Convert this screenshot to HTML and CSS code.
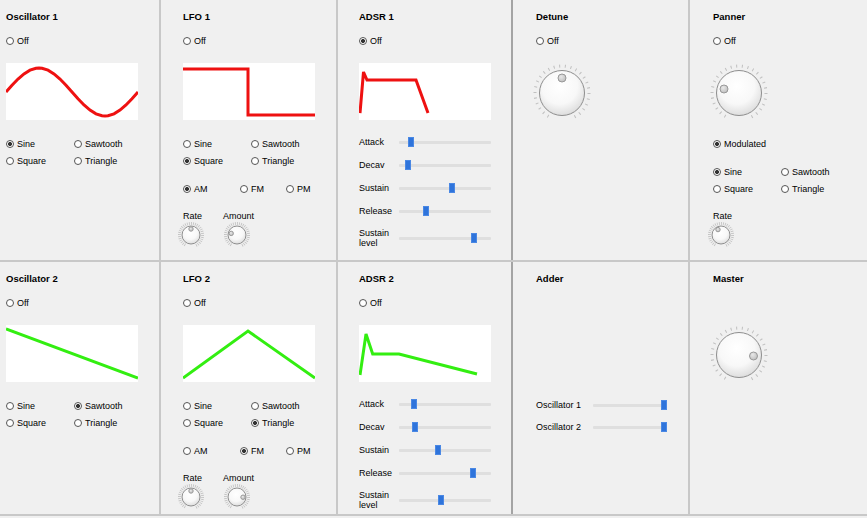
FILE: index.html
```html
<!DOCTYPE html>
<html>
<head>
<meta charset="utf-8">
<link rel="stylesheet" href="styles.css">
</head>
<body>
<svg class="defs" width="0" height="0">
  <defs>
    <radialGradient id="kg" cx="0.45" cy="0.35" r="0.72">
      <stop offset="0" stop-color="#ffffff"/>
      <stop offset="0.55" stop-color="#f8f8f8"/>
      <stop offset="1" stop-color="#d6d6d6"/>
    </radialGradient>
    <radialGradient id="dg" cx="0.4" cy="0.35" r="0.7">
      <stop offset="0" stop-color="#e8e8e8"/>
      <stop offset="1" stop-color="#bcbcbc"/>
    </radialGradient>
  </defs>
</svg>
<div class="grid">
  <!-- Row 1 -->
  <div class="cell c1">
    <div class="title">Oscillator 1</div>
    <div class="radio off"><span class="rb"></span>Off</div>
    <svg class="wave" viewBox="0 0 132 57"><polyline class="red" points="0,29 6,22.24 12,16.03 18,10.86 24,7.17 30,5.24 33,5 36,5.24 42,7.17 48,10.86 54,16.03 60,22.24 66,29 72,35.76 78,41.97 84,47.14 90,50.83 96,52.76 99,53 102,52.76 108,50.83 114,47.14 120,41.97 126,35.76 132,29"/></svg>
    <div class="opts">
      <div class="radio"><span class="rb on"></span>Sine</div>
      <div class="radio"><span class="rb"></span>Sawtooth</div>
      <div class="radio"><span class="rb"></span>Square</div>
      <div class="radio"><span class="rb"></span>Triangle</div>
    </div>
  </div>
  <div class="cell c2">
    <div class="title">LFO 1</div>
    <div class="radio off"><span class="rb"></span>Off</div>
    <svg class="wave" viewBox="0 0 132 57"><polyline class="red" points="0,6 65,6 65,52 132,52"/></svg>
    <div class="opts">
      <div class="radio"><span class="rb"></span>Sine</div>
      <div class="radio"><span class="rb"></span>Sawtooth</div>
      <div class="radio"><span class="rb on"></span>Square</div>
      <div class="radio"><span class="rb"></span>Triangle</div>
    </div>
    <div class="modes">
      <div class="radio"><span class="rb on"></span>AM</div>
      <div class="radio"><span class="rb"></span>FM</div>
      <div class="radio"><span class="rb"></span>PM</div>
    </div>
    <div class="knobs">
      <div class="kgroup kg1">
        <div class="klabel">Rate</div>
        <svg class="sknob" viewBox="0 0 28 28"><circle class="sticks" cx="14" cy="14" r="11.5" pathLength="360" transform="rotate(120 14 14)"/><circle class="body" cx="14" cy="14" r="9"/><circle class="dot" cx="14" cy="8" r="2.2"/></svg>
      </div>
      <div class="kgroup kg2">
        <div class="klabel">Amount</div>
        <svg class="sknob" viewBox="0 0 28 28"><circle class="sticks" cx="14" cy="14" r="11.5" pathLength="360" transform="rotate(120 14 14)"/><circle class="body" cx="14" cy="14" r="9"/><circle class="dot" cx="8.2" cy="12.4" r="2.2"/></svg>
      </div>
    </div>
  </div>
  <div class="cell c3">
    <div class="title">ADSR 1</div>
    <div class="radio off"><span class="rb on"></span>Off</div>
    <svg class="wave" viewBox="0 0 132 57"><polyline class="red" points="1,50 4.5,9 8,17 57,17 69,50"/></svg>
    <div class="sliders">
      <div class="srow"><div class="slabel">Attack</div><div class="track"><span class="thumb" style="left:9px"></span></div></div>
      <div class="srow"><div class="slabel">Decav</div><div class="track"><span class="thumb" style="left:6px"></span></div></div>
      <div class="srow"><div class="slabel">Sustain</div><div class="track"><span class="thumb" style="left:50px"></span></div></div>
      <div class="srow"><div class="slabel">Release</div><div class="track"><span class="thumb" style="left:24px"></span></div></div>
      <div class="srow two"><div class="slabel">Sustain<br>level</div><div class="track"><span class="thumb" style="left:72px"></span></div></div>
    </div>
  </div>
  <div class="cell c4">
    <div class="title">Detune</div>
    <div class="radio off"><span class="rb"></span>Off</div>
    <svg class="bigknob" viewBox="0 0 64 64"><circle class="bticks" cx="32" cy="32" r="27" pathLength="360" transform="rotate(120 32 32)"/><circle class="body" cx="32" cy="32" r="22.5"/><circle class="dot" cx="32" cy="17" r="4"/></svg>
  </div>
  <div class="cell c5">
    <div class="title">Panner</div>
    <div class="radio off"><span class="rb"></span>Off</div>
    <svg class="bigknob" viewBox="0 0 64 64"><circle class="bticks" cx="32" cy="32" r="27" pathLength="360" transform="rotate(120 32 32)"/><circle class="body" cx="32" cy="32" r="22.5"/><circle class="dot" cx="17" cy="28" r="4"/></svg>
    <div class="radio mod"><span class="rb on"></span>Modulated</div>
    <div class="opts popts">
      <div class="radio"><span class="rb on"></span>Sine</div>
      <div class="radio"><span class="rb"></span>Sawtooth</div>
      <div class="radio"><span class="rb"></span>Square</div>
      <div class="radio"><span class="rb"></span>Triangle</div>
    </div>
    <div class="knobs">
      <div class="kgroup kg1">
        <div class="klabel">Rate</div>
        <svg class="sknob" viewBox="0 0 28 28"><circle class="sticks" cx="14" cy="14" r="11.5" pathLength="360" transform="rotate(120 14 14)"/><circle class="body" cx="14" cy="14" r="9"/><circle class="dot" cx="11" cy="8.6" r="2.2"/></svg>
      </div>
    </div>
  </div>

  <!-- Row 2 -->
  <div class="cell c1">
    <div class="title">Oscillator 2</div>
    <div class="radio off"><span class="rb"></span>Off</div>
    <svg class="wave" viewBox="0 0 132 57"><polyline class="green" points="0,4 132,53"/></svg>
    <div class="opts">
      <div class="radio"><span class="rb"></span>Sine</div>
      <div class="radio"><span class="rb on"></span>Sawtooth</div>
      <div class="radio"><span class="rb"></span>Square</div>
      <div class="radio"><span class="rb"></span>Triangle</div>
    </div>
  </div>
  <div class="cell c2">
    <div class="title">LFO 2</div>
    <div class="radio off"><span class="rb"></span>Off</div>
    <svg class="wave" viewBox="0 0 132 57"><polyline class="green" points="0,53 65,6 132,53"/></svg>
    <div class="opts">
      <div class="radio"><span class="rb"></span>Sine</div>
      <div class="radio"><span class="rb"></span>Sawtooth</div>
      <div class="radio"><span class="rb"></span>Square</div>
      <div class="radio"><span class="rb on"></span>Triangle</div>
    </div>
    <div class="modes">
      <div class="radio"><span class="rb"></span>AM</div>
      <div class="radio"><span class="rb on"></span>FM</div>
      <div class="radio"><span class="rb"></span>PM</div>
    </div>
    <div class="knobs">
      <div class="kgroup kg1">
        <div class="klabel">Rate</div>
        <svg class="sknob" viewBox="0 0 28 28"><circle class="sticks" cx="14" cy="14" r="11.5" pathLength="360" transform="rotate(120 14 14)"/><circle class="body" cx="14" cy="14" r="9"/><circle class="dot" cx="14" cy="8" r="2.2"/></svg>
      </div>
      <div class="kgroup kg2">
        <div class="klabel">Amount</div>
        <svg class="sknob" viewBox="0 0 28 28"><circle class="sticks" cx="14" cy="14" r="11.5" pathLength="360" transform="rotate(120 14 14)"/><circle class="body" cx="14" cy="14" r="9"/><circle class="dot" cx="20" cy="14.2" r="2.2"/></svg>
      </div>
    </div>
  </div>
  <div class="cell c3">
    <div class="title">ADSR 2</div>
    <div class="radio off"><span class="rb"></span>Off</div>
    <svg class="wave" viewBox="0 0 132 57"><polyline class="green" points="1,50 7,9 13.7,29 40,29 118,49"/></svg>
    <div class="sliders">
      <div class="srow"><div class="slabel">Attack</div><div class="track"><span class="thumb" style="left:12px"></span></div></div>
      <div class="srow"><div class="slabel">Decav</div><div class="track"><span class="thumb" style="left:13px"></span></div></div>
      <div class="srow"><div class="slabel">Sustain</div><div class="track"><span class="thumb" style="left:36px"></span></div></div>
      <div class="srow"><div class="slabel">Release</div><div class="track"><span class="thumb" style="left:71px"></span></div></div>
      <div class="srow two"><div class="slabel">Sustain<br>level</div><div class="track"><span class="thumb" style="left:39px"></span></div></div>
    </div>
  </div>
  <div class="cell c4">
    <div class="title">Adder</div>
    <div class="mix">
      <div class="srow"><div class="mlabel">Oscillator 1</div><div class="track mtrack"><span class="thumb" style="left:68px"></span></div></div>
      <div class="srow"><div class="mlabel">Oscillator 2</div><div class="track mtrack"><span class="thumb" style="left:68px"></span></div></div>
    </div>
  </div>
  <div class="cell c5">
    <div class="title">Master</div>
    <svg class="bigknob master" viewBox="0 0 64 64"><circle class="bticks" cx="32" cy="32" r="27" pathLength="360" transform="rotate(120 32 32)"/><circle class="body" cx="32" cy="32" r="22.5"/><circle class="dot" cx="46.5" cy="33" r="4"/></svg>
  </div>
</div>
</body>
</html>
```

FILE: styles.css
```css
* { box-sizing: border-box; }

body {
  margin: 0;
  width: 867px;
  height: 518px;
  overflow: hidden;
  background: #f0f0f0;
  font-family: "Liberation Sans", Arial, sans-serif;
  font-size: 9px;
  color: #000;
}

.defs { display: block; width: 0; height: 0; }

.grid {
  display: grid;
  grid-template-columns: 159px 175px 173px 175px 177px;
  grid-template-rows: 260px 252px;
  gap: 2px;
  background: #c8c8c8;
  border-bottom: 2px solid #c8c8c8;
}

.cell {
  background: #f0f0f0;
  padding-top: 10px;
  display: flex;
  flex-direction: column;
  align-items: flex-start;
  overflow: hidden;
}

.c1 { padding-left: 6px; }
.c2 { padding-left: 22px; }
.c3 { padding-left: 21px; }
.c4 { padding-left: 23px; box-shadow: -2px 0 0 #a4a4a4; }
.c5 { padding-left: 23px; }

.title {
  font-weight: bold;
  font-size: 9.5px;
  line-height: 14px;
  height: 14px;
  white-space: nowrap;
}

.radio {
  display: flex;
  align-items: center;
  height: 14px;
  line-height: 14px;
  white-space: nowrap;
}

.rb {
  flex: none;
  width: 8px;
  height: 8px;
  margin-right: 3px;
  border: 1px solid #555;
  border-radius: 50%;
  background: #fff;
}

.rb.on {
  background: radial-gradient(circle, #333 0 1.7px, #fff 2.3px);
}

.off { margin-top: 10px; }

.wave {
  display: block;
  width: 132px;
  height: 57px;
  margin-top: 15px;
  background: #fff;
}

.wave polyline {
  fill: none;
  stroke-width: 3;
  stroke-linejoin: miter;
}

.red { stroke: #ee1111; }
.green { stroke: #33ee11; }

.opts {
  display: grid;
  grid-template-columns: 68px auto;
  row-gap: 3px;
  margin-top: 17px;
}

.modes {
  display: grid;
  grid-template-columns: 57px 46px auto;
  margin-top: 14px;
}

.knobs {
  display: flex;
  margin-top: 13px;
}

.kgroup {
  display: flex;
  flex-direction: column;
  align-items: flex-start;
}

.kg1 { width: 40px; }

.klabel {
  height: 14px;
  line-height: 14px;
}

.sknob {
  display: block;
  width: 28px;
  height: 28px;
  margin-top: -2px;
}

.kg1 .sknob { margin-left: -6px; }

.sticks {
  fill: none;
  stroke: #c2c2c2;
  stroke-width: 3;
  stroke-dasharray: 4 6 4 6 4 6 4 6 4 6 4 6 4 6 4 6 4 6 4 6 4 6 4 6 4 6 4 6 4 6 4 6 4 6 4 6 4 6 4 6 4 6 4 6 4 6 4 6 4 6 4 6 4 6 4 6 4 6 4 6 4 66;
}

.bticks {
  fill: none;
  stroke: #c0c0c0;
  stroke-width: 3;
  stroke-dasharray: 2.2 9.8 2.2 9.8 2.2 9.8 2.2 9.8 2.2 9.8 2.2 9.8 2.2 9.8 2.2 9.8 2.2 9.8 2.2 9.8 2.2 9.8 2.2 9.8 2.2 9.8 2.2 9.8 2.2 9.8 2.2 9.8 2.2 9.8 2.2 9.8 2.2 9.8 2.2 9.8 2.2 9.8 2.2 9.8 2.2 9.8 2.2 9.8 2.2 9.8 2.2 57.8;
}

.body {
  fill: url(#kg);
  stroke: #8e8e8e;
  stroke-width: 1;
}

.dot {
  fill: url(#dg);
  stroke: #999;
  stroke-width: 1;
}

.bigknob {
  display: block;
  width: 64px;
  height: 64px;
  margin-top: 13px;
  margin-left: -6px;
}

.bigknob.master { margin-top: 37px; }

.mod { margin-top: 12px; }
.popts { margin-top: 14px; }

.sliders {
  display: flex;
  flex-direction: column;
  gap: 9px;
  margin-top: 15px;
}

.srow {
  display: flex;
  align-items: center;
  min-height: 14px;
}

.srow.two { margin-top: 1px; }

.slabel {
  width: 40px;
  line-height: 10px;
}

.track {
  position: relative;
  width: 92px;
  height: 3px;
  background: #dfdfdf;
  border-radius: 1px;
}

.thumb {
  position: absolute;
  top: -4px;
  width: 6px;
  height: 10px;
  background: #2f74db;
  border: 1px solid #4a88e4;
}

.mix {
  display: flex;
  flex-direction: column;
  gap: 8px;
  margin-top: 112px;
}

.mlabel {
  width: 57px;
  white-space: nowrap;
}

.mtrack { width: 74px; }
```
